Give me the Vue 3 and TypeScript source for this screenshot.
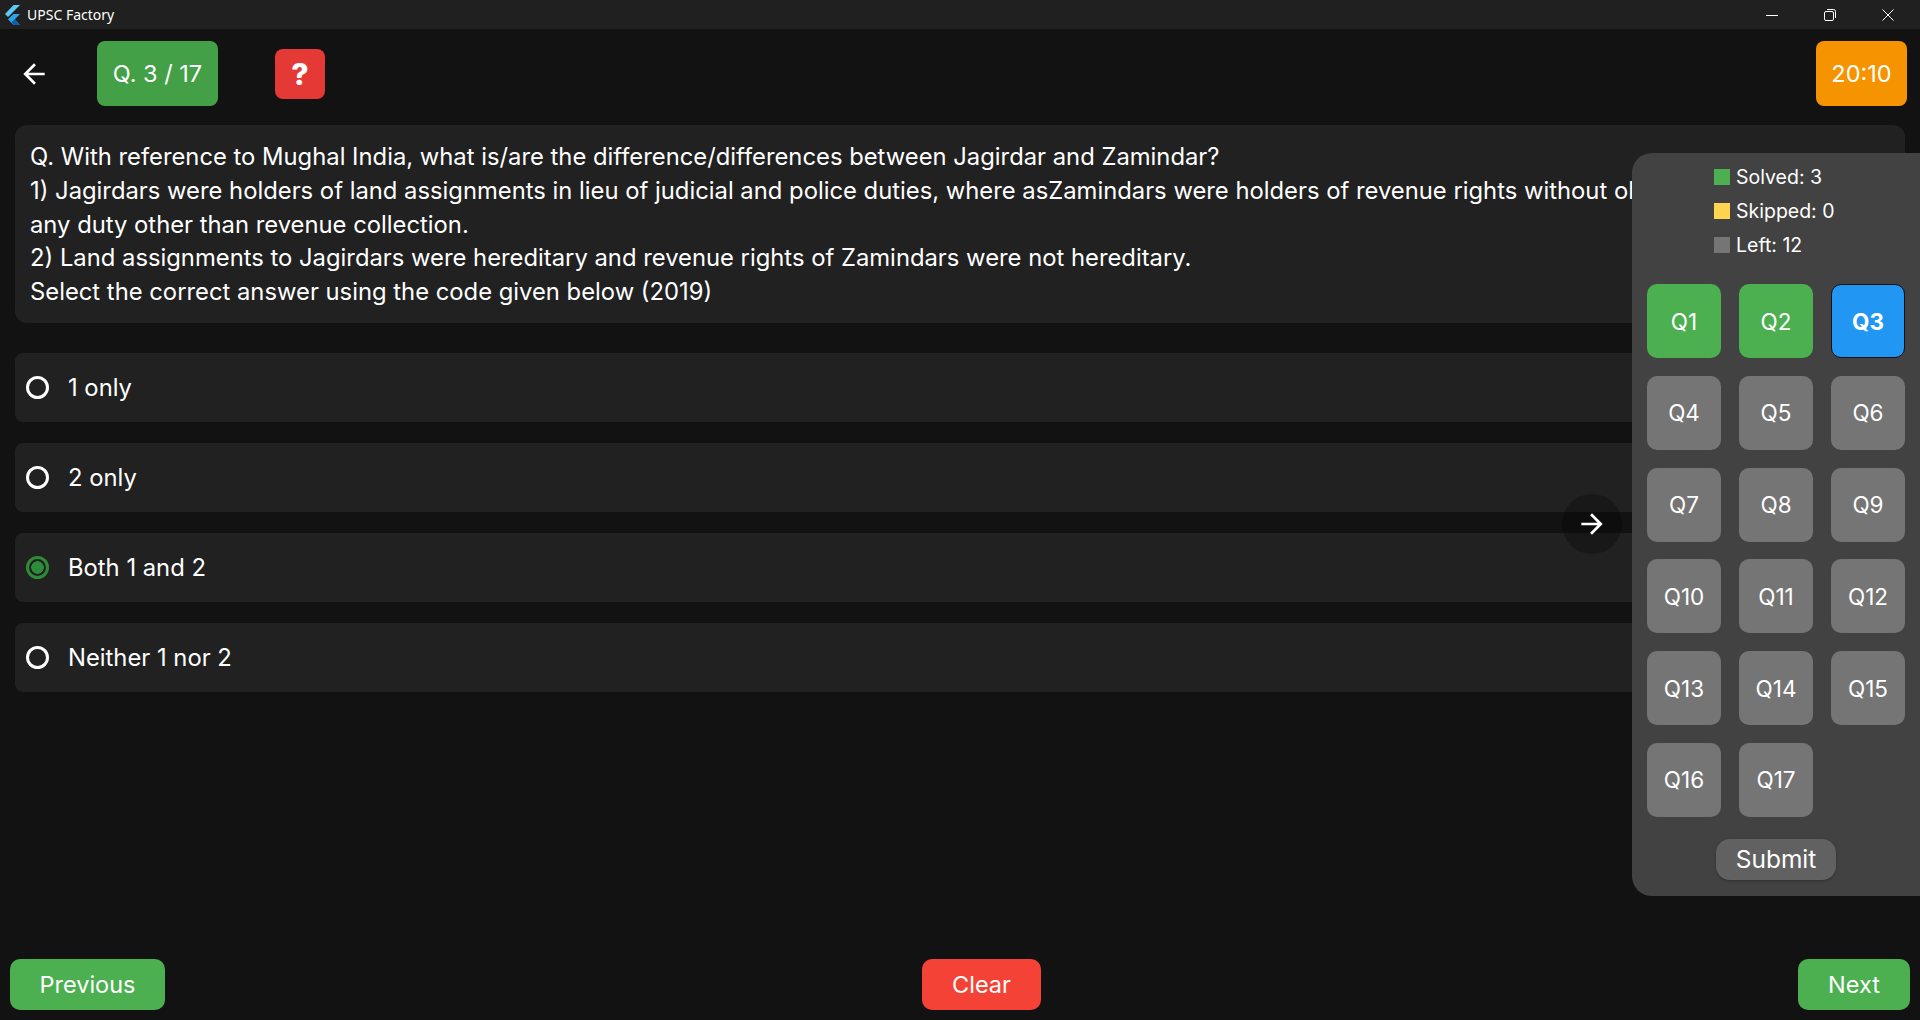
<template>
  <div class="window">
    <div class="titlebar">
      <svg class="logo" viewBox="0 0 16 20" width="16" height="20">
        <path d="M9.5 0H16L4 12 1 9z" fill="#5cc8f8" />
        <path d="M9.5 9H16l-5.2 5.3L16 20H9.5l-5.6-5.7z" fill="#2aa5ea" />
        <path d="M7.6 17.1l3.2-2.8L16 20H9.5z" fill="#0d5fa8" />
      </svg>
      <span class="app-name">UPSC Factory</span>
      <div class="win-controls">
        <svg width="12" height="12" viewBox="0 0 12 12"><path d="M0 6.5h12" stroke="#fff" stroke-width="1" /></svg>
        <svg width="12" height="12" viewBox="0 0 12 12" fill="none" stroke="#fff" stroke-width="1"><rect x="0.5" y="2.5" width="9" height="9" rx="1.5" /><path d="M3 0.5h6.5a2 2 0 0 1 2 2V9" /></svg>
        <svg width="12" height="12" viewBox="0 0 12 12"><path d="M0.5 0.5l11 11M11.5 0.5l-11 11" stroke="#fff" stroke-width="1" /></svg>
      </div>
    </div>

    <div class="page">
      <header class="topbar">
        <svg class="back" viewBox="0 0 24 24" width="32" height="32"><path d="M20 11H7.83l5.59-5.59L12 4l-8 8 8 8 1.41-1.41L7.83 13H20z" fill="#fff" /></svg>
        <div class="counter">Q. 3 / 17</div>
        <div class="help">?</div>
        <div class="timer">20:10</div>
      </header>

      <section class="question">
        <p v-for="line in questionLines" :key="line">{{ line }}</p>
      </section>

      <div class="options">
        <div v-for="opt in options" :key="opt" class="option">
          <span class="radio" :class="{ on: opt === selected }"></span>
          <span>{{ opt }}</span>
        </div>
      </div>

      <footer class="bottombar">
        <button class="btn prev">Previous</button>
        <button class="btn clear">Clear</button>
        <button class="btn next">Next</button>
      </footer>

      <div class="toggle">
        <svg viewBox="0 0 24 24" width="32" height="32"><path d="M12 4l-1.41 1.41L16.17 11H4v2h12.17l-5.58 5.59L12 20l8-8z" fill="#fff" /></svg>
      </div>

      <aside class="panel">
        <div class="legend">
          <div v-for="item in legend" :key="item.label" class="legend-row">
            <i :style="{ background: item.color }"></i>{{ item.label }}
          </div>
        </div>
        <div class="grid">
          <div v-for="n in 17" :key="n" class="cell" :class="cellClass(n)">Q{{ n }}</div>
        </div>
        <button class="submit">Submit</button>
      </aside>
    </div>
  </div>
</template>

<script setup lang="ts">
const questionLines = [
  'Q. With reference to Mughal India, what is/are the difference/differences between Jagirdar and Zamindar?',
  '1) Jagirdars were holders of land assignments in lieu of judicial and police duties, where asZamindars were holders of revenue rights without obligation to perform',
  'any duty other than revenue collection.',
  '2) Land assignments to Jagirdars were hereditary and revenue rights of Zamindars were not hereditary.',
  'Select the correct answer using the code given below (2019)',
]
const options = ['1 only', '2 only', 'Both 1 and 2', 'Neither 1 nor 2']
const selected = 'Both 1 and 2'
const legend = [
  { label: 'Solved: 3', color: '#4caf50' },
  { label: 'Skipped: 0', color: '#ffd54f' },
  { label: 'Left: 12', color: '#757575' },
]

function cellClass(n: number) {
  if (n === 3) return 'current'
  return n < 3 ? 'solved' : ''
}
</script>

<style>
html, body { margin: 0; background: #121212; overflow: hidden; }
</style>

<style scoped>
.window {
  height: 1020px;
  display: flex;
  flex-direction: column;
  background: #121212;
  color: #fff;
  font-family: Inter, "Noto Sans", sans-serif;
}
.titlebar {
  height: 29px;
  flex-shrink: 0;
  display: flex;
  align-items: center;
  padding-left: 4px;
  background: #202020;
  font-family: "Noto Sans", sans-serif;
  font-size: 14px;
}
.logo { margin-right: 7px; }
.win-controls {
  margin-left: auto;
  display: flex;
  gap: 46px;
  padding-right: 26px;
}
.page {
  flex: 1;
  position: relative;
  display: flex;
  flex-direction: column;
  overflow: hidden;
}
.topbar {
  display: flex;
  align-items: center;
  height: 65px;
  margin-top: 12px;
  padding: 0 13px 0 18px;
}
.counter {
  margin-left: 47px;
  width: 121px;
  height: 65px;
  border-radius: 8px;
  background: #43a047;
  display: flex;
  align-items: center;
  justify-content: center;
  font-size: 23.5px;
}
.help {
  margin-left: 57px;
  width: 50px;
  height: 50px;
  border-radius: 8px;
  background: #e53935;
  display: flex;
  align-items: center;
  justify-content: center;
  font-size: 30px;
  font-weight: 800;
}
.timer {
  margin-left: auto;
  width: 91px;
  height: 65px;
  border-radius: 8px;
  background: #f59300;
  display: flex;
  align-items: center;
  justify-content: center;
  font-size: 23.5px;
}
.question {
  margin: 19px 15px 0;
  padding: 15px 15px;
  height: 198px;
  box-sizing: border-box;
  border-radius: 12px;
  background: #212121;
  font-size: 23.8px;
  line-height: 33.8px;
}
/* the side panel sits over the end of the long line */
.question p { margin: 0; max-width: 1602px; white-space: nowrap; overflow: hidden; }
.options {
  margin: 30px 15px 0;
  display: flex;
  flex-direction: column;
  gap: 21px;
}
.option {
  height: 69px;
  display: flex;
  align-items: center;
  gap: 19px;
  padding-left: 11px;
  border-radius: 8px;
  background: #212121;
  font-size: 23.8px;
}
.radio {
  width: 23px;
  height: 23px;
  box-sizing: border-box;
  border: 3px solid #fff;
  border-radius: 50%;
}
.radio.on {
  border-color: #2e8b37;
  background: radial-gradient(circle, #2e8b37 0 6px, transparent 6.5px);
}
.bottombar {
  margin-top: auto;
  margin-bottom: 10px;
  padding: 0 10px;
  display: flex;
  align-items: center;
  justify-content: space-between;
}
.btn {
  height: 51px;
  border: none;
  border-radius: 10px;
  color: #fff;
  font: inherit;
  font-size: 23.5px;
}
.prev { width: 155px; background: #4caf50; }
.clear { width: 119px; background: #f44336; }
.next { width: 112px; background: #4caf50; }
.toggle {
  position: absolute;
  left: 1562px;
  top: 465px;
  width: 60px;
  height: 60px;
  border-radius: 50%;
  background: rgba(0, 0, 0, 0.25);
  display: flex;
  align-items: center;
  justify-content: center;
}
.panel {
  position: absolute;
  right: 0;
  top: 124px;
  width: 288px;
  height: 743px;
  box-sizing: border-box;
  padding: 7px 15px 0;
  border-radius: 20px 0 0 20px;
  background: #424242;
  display: flex;
  flex-direction: column;
}
.legend {
  margin-left: 67px;
  display: flex;
  flex-direction: column;
}
.legend-row {
  height: 34px;
  display: flex;
  align-items: center;
  gap: 6px;
  font-size: 19.5px;
}
.legend-row i {
  width: 16px;
  height: 16px;
}
.grid {
  margin-top: 22px;
  display: grid;
  grid-template-columns: repeat(3, 74px);
  grid-auto-rows: 74px;
  gap: 17.8px 18px;
}
.cell {
  border-radius: 10px;
  background: #757575;
  display: flex;
  align-items: center;
  justify-content: center;
  font-size: 22.5px;
}
.cell.solved { background: #4caf50; }
.cell.current {
  background: #2196f3;
  border: 1px solid #0b0f14;
  font-weight: 700;
}
.submit {
  align-self: center;
  margin-top: 22px;
  width: 120px;
  height: 41px;
  border: none;
  border-radius: 14px;
  background: #616161;
  color: #fff;
  font: inherit;
  font-size: 24.5px;
  box-shadow: 0 1px 3px rgba(0, 0, 0, 0.3);
}
</style>
